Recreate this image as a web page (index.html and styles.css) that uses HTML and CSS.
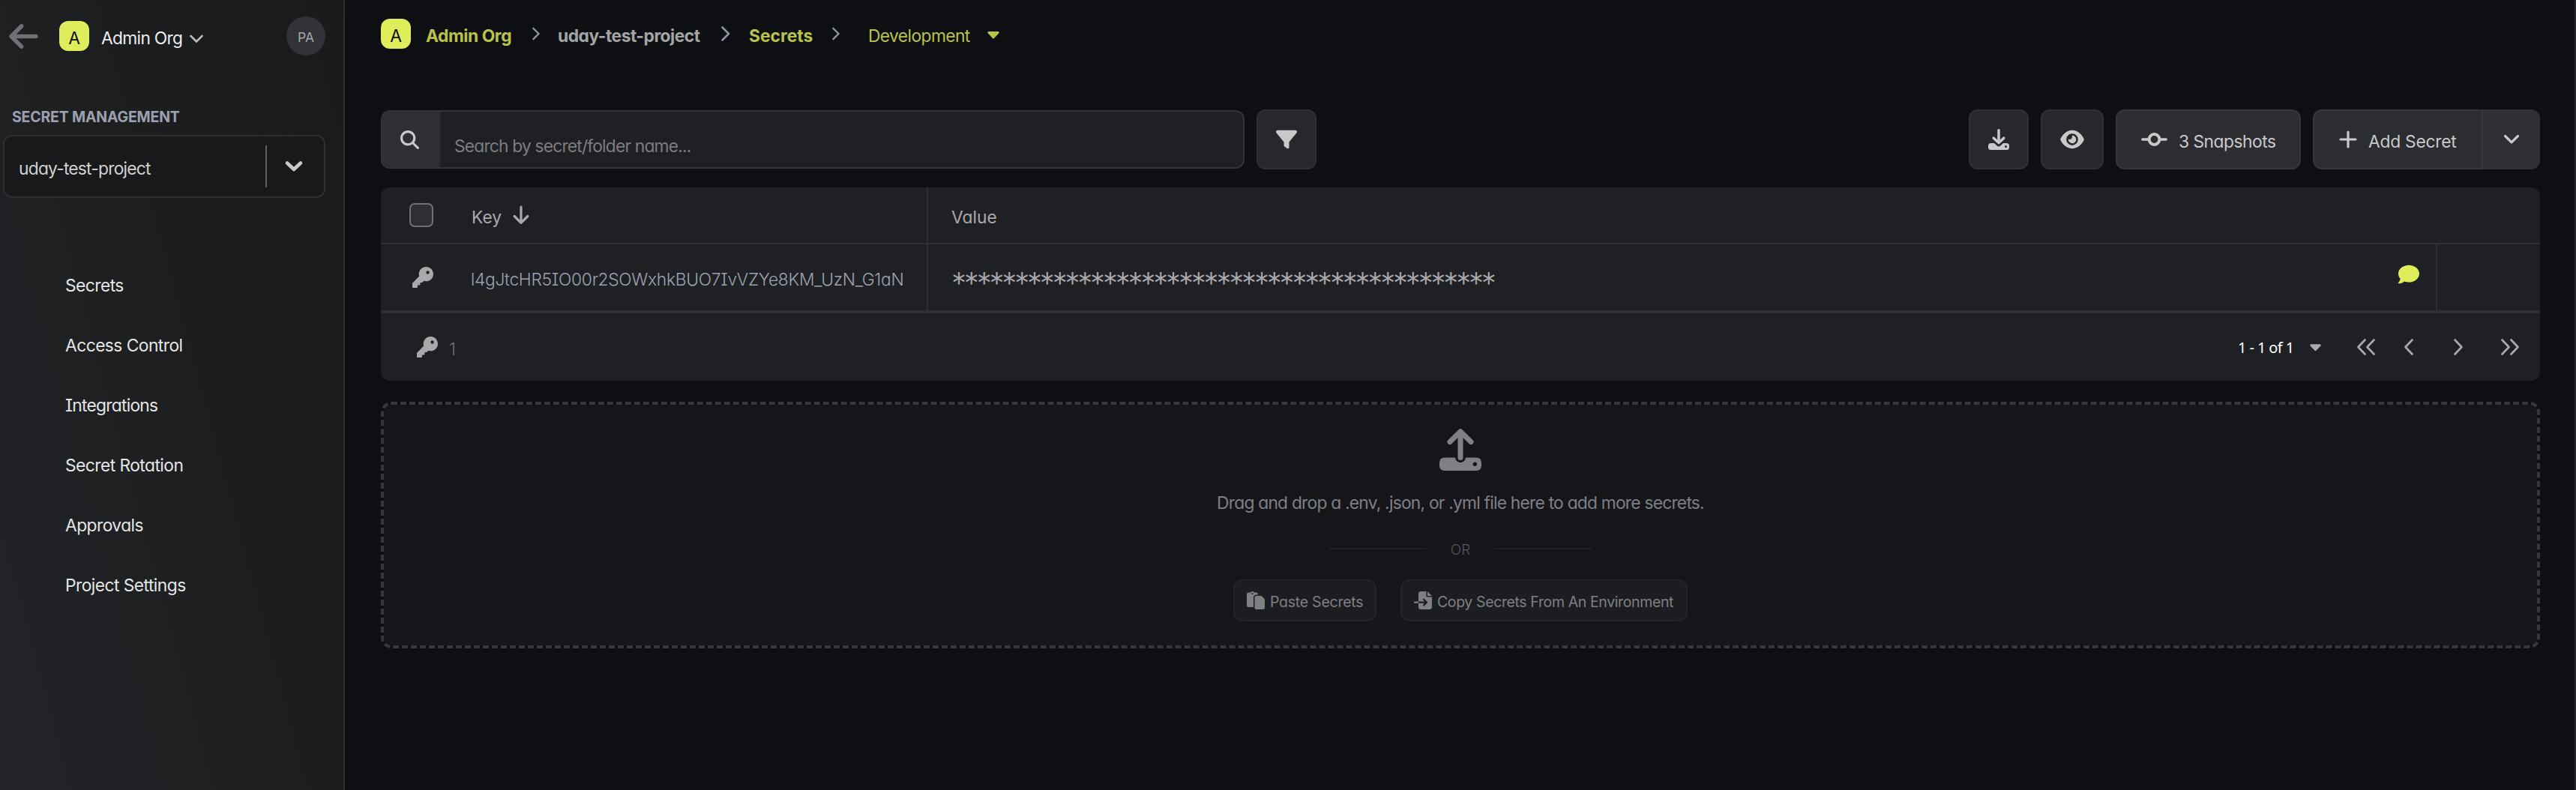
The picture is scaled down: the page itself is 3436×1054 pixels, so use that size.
FILE: index.html
```html
<!DOCTYPE html>
<html lang="en">
<head>
<meta charset="utf-8">
<title>Secrets</title>
<link rel="stylesheet" href="styles.css">
</head>
<body>
<svg width="0" height="0" class="defs">
  <symbol id="i-key" viewBox="0 0 512 512"><path d="M336 352c97.2 0 176-78.8 176-176S433.2 0 336 0S160 78.8 160 176c0 18.7 2.9 36.8 8.3 53.7L7 391c-4.5 4.5-7 10.6-7 17l0 80c0 13.3 10.7 24 24 24l80 0c13.3 0 24-10.7 24-24l0-40 40 0c13.3 0 24-10.7 24-24l0-40 40 0c6.4 0 12.5-2.5 17-7l33.3-33.3c16.9 5.4 35 8.3 53.7 8.3zM376 96a40 40 0 1 1 0 80 40 40 0 1 1 0-80z"/></symbol>
</svg>
<aside class="sidebar">
  <header class="org">
    <svg class="back" viewBox="0 64 448 384"><path d="M9.400 233.400c-12.500 12.500-12.500 32.800 0 45.300l160 160c12.500 12.500 32.800 12.500 45.300 0s12.500-32.800 0-45.300L109.200 288 416 288c17.700 0 32-14.300 32-32s-14.300-32-32-32l-306.700 0L214.600 118.600c12.500-12.500 12.500-32.800 0-45.300s-32.800-12.500-45.300 0l-160 160z"/></svg>
    <span class="badge">A</span>
    <span class="t org-name">Admin Org</span>
    <svg class="line org-chev" viewBox="0 0 20 14"><path d="M2.500 4 10 11.500 17.500 4" stroke-width="2.600"/></svg>
    <span class="avatar">PA</span>
  </header>
  <h2 class="section">SECRET MANAGEMENT</h2>
  <div class="select">
    <span class="t select-name">uday-test-project</span>
    <i class="select-sep"></i>
    <svg class="line select-chev" viewBox="0 0 24 16"><path d="M3 3.500 12 12 21 3.500" stroke-width="4.600"/></svg>
  </div>
  <nav class="menu">
    <a class="t">Secrets</a>
    <a class="t">Access Control</a>
    <a class="t">Integrations</a>
    <a class="t">Secret Rotation</a>
    <a class="t">Approvals</a>
    <a class="t">Project Settings</a>
  </nav>
</aside>
<main class="main">
  <div class="crumbs">
    <span class="badge">A</span>
    <b class="t crumb-org">Admin Org</b>
    <svg class="line sep" viewBox="0 0 12 20"><path d="M2 2 10 10 2 18" stroke-width="2.600"/></svg>
    <b class="t crumb-project">uday-test-project</b>
    <svg class="line sep big" viewBox="0 0 12 20"><path d="M2 1.500 10.500 10 2 18.500" stroke-width="2.600"/></svg>
    <b class="t crumb-secrets">Secrets</b>
    <svg class="line sep" viewBox="0 0 12 20"><path d="M2 2 10 10 2 18" stroke-width="2.600"/></svg>
    <span class="t crumb-env">Development</span>
    <svg class="crumb-caret" viewBox="0 0 16 10"><path d="M1.500 0h13q2 .6.800 2.200L9 9q-1 1-2 0L.700 2.200Q-.400.600 1.500 0z"/></svg>
  </div>
  <div class="toolbar">
    <div class="search">
      <span class="search-icon"><svg viewBox="0 0 512 512"><path d="M416 208c0 45.900-14.900 88.300-40 122.700L502.600 457.400c12.500 12.500 12.500 32.800 0 45.300s-32.800 12.500-45.300 0L330.700 376c-34.400 25.200-76.800 40-122.700 40C93.100 416 0 322.900 0 208S93.100 0 208 0S416 93.100 416 208zM208 352a144 144 0 1 0 0-288 144 144 0 1 0 0 288z"/></svg></span>
      <span class="search-hint">Search by secret/folder name...</span>
    </div>
    <button class="btn filter"><svg viewBox="0 0 512 512"><path d="M3.900 54.900C10.500 40.900 24.500 32 40 32l432 0c15.500 0 29.500 8.900 36.100 22.900s4.600 30.500-5.200 42.500L320 320.900 320 448c0 12.100-6.800 23.200-17.700 28.600s-23.800 4.300-33.500-3l-64-48c-8.100-6-12.800-15.500-12.800-25.600l0-79.100L9 97.300C-.7 85.400-2.800 68.800 3.900 54.900z"/></svg></button>
    <div class="actions">
      <button class="btn download">
        <svg viewBox="0 0 28 28"><path class="s" d="M14 1.800V17M7.200 12.200 14 18.600 20.800 12.200" stroke-width="3.500"/><path fill-rule="evenodd" d="M3.500 19H8l4 3.800q2 1.600 4 0L20 19h4.500q3.500 0 3.500 3.500v2q0 3.500-3.500 3.500h-21Q0 28 0 24.500v-2Q0 19 3.500 19zM23.500 22a1.500 1.500 0 1 0 0 3 1.500 1.500 0 1 0 0-3z"/></svg>
      </button>
      <button class="btn eye"><svg viewBox="0 0 576 512"><path d="M288 32c-80.800 0-145.500 36.800-192.600 80.600C48.600 156 17.300 208 2.500 243.700c-3.300 7.900-3.300 16.700 0 24.600C17.300 304 48.600 356 95.400 399.400C142.500 443.200 207.200 480 288 480s145.500-36.800 192.600-80.600c46.800-43.500 78.100-95.400 93-131.100c3.300-7.900 3.300-16.700 0-24.600c-14.900-35.700-46.200-87.700-93-131.100C433.500 68.800 368.800 32 288 32zM144 256a144 144 0 1 1 288 0 144 144 0 1 1 -288 0zm144-64c0 35.300-28.700 64-64 64c-7.100 0-13.900-1.200-20.300-3.300c-5.500-1.800-11.900 1.600-11.700 7.400c.3 6.900 1.300 13.800 3.200 20.700c13.700 51.200 66.400 81.600 117.600 67.900s81.600-66.400 67.900-117.600c-11.100-41.500-47.800-69.400-88.600-71.100c-5.800-.2-9.200 6.100-7.400 11.700c2.100 6.400 3.300 13.200 3.300 20.300z"/></svg></button>
      <button class="btn snapshots">
        <svg class="line" viewBox="0 0 35 18"><path d="M1.900 9H10M25 9h8.100" stroke-width="3.600"/><circle cx="17.500" cy="9" r="6.900" stroke-width="4"/></svg>
        <span class="t">3 Snapshots</span>
      </button>
      <div class="split">
        <button class="btn add">
          <svg class="line" viewBox="0 0 24 24"><path d="M12 2v20M2 12h20" stroke-width="3.200"/></svg>
          <span class="t">Add Secret</span>
        </button>
        <span class="more"><svg class="line" viewBox="0 0 22 14"><path d="M2.500 2.500 11 10.800 19.500 2.500" stroke-width="3.200"/></svg></span>
      </div>
    </div>
  </div>
  <section class="table">
    <div class="row head">
      <div class="c-icon"><span class="checkbox"></span></div>
      <div class="c-key"><span class="t key-head">Key</span>
        <svg class="line down" viewBox="0 0 22 26"><path d="M11 2v21M2.200 14.500 11 23.300 19.800 14.500" stroke-width="3.200"/></svg></div>
      <div class="c-value"><span class="t">Value</span></div>
    </div>
    <div class="row item">
      <div class="c-icon"><svg class="key"><use href="#i-key"/></svg></div>
      <div class="c-key"><span class="t key-name">l4gJtcHR5IO00r2SOWxhkBUO7IvVZYe8KM_UzN_G1aN</span></div>
      <div class="c-value"><span class="stars">*******************************************</span>
        <svg class="comment" viewBox="0 0 512 512"><path d="M512 240c0 114.900-114.600 208-256 208c-37.100 0-72.300-6.400-104.100-17.900c-11.900 8.700-31.300 20.600-54.300 30.600C73.600 471.100 44.700 480 16 480c-6.500 0-12.300-3.900-14.800-9.900c-2.500-6-1.100-12.800 3.400-17.400l.3-.3c.3-.3 .7-.7 1.300-1.400c1.100-1.200 2.800-3.100 4.900-5.700c4.100-5 9.600-12.400 15.200-21.600c10-16.600 19.500-38.400 21.400-62.900C17.700 326.800 0 285.100 0 240C0 125.100 114.600 32 256 32s256 93.100 256 208z"/></svg></div>
      <div class="c-end"></div>
    </div>
    <div class="foot">
      <svg class="key"><use href="#i-key"/></svg>
      <span class="t count">1</span>
      <span class="range">1 - 1 of 1</span>
      <svg class="foot-caret" viewBox="0 0 16 10"><path d="M1.500 0h13q2 .6.800 2.200L9 9q-1 1-2 0L.700 2.200Q-.400.600 1.500 0z"/></svg>
      <svg class="line p-first" viewBox="0 0 24 22"><path d="M10.500 1.500 1.500 11l9 9.500M22.500 1.500 13.500 11l9 9.500" stroke-width="2.700"/></svg>
      <svg class="line p-prev" viewBox="0 0 12 22"><path d="M10.500 1.500 1.500 11l9 9.500" stroke-width="2.700"/></svg>
      <svg class="line p-next" viewBox="0 0 12 22"><path d="M1.500 1.500l9 9.500-9 9.500" stroke-width="2.700"/></svg>
      <svg class="line p-last" viewBox="0 0 24 22"><path d="M1.500 1.500l9 9.500-9 9.500M13.500 1.500l9 9.500-9 9.500" stroke-width="2.700"/></svg>
    </div>
  </section>
  <section class="drop">
    <svg class="upload" viewBox="0 0 56 56"><path class="s" d="M28 4V38.500M14 17.500 28 3.800 42 17.500" stroke-width="7"/><path fill-rule="evenodd" d="M7 38.500H21a7 6.500 0 0 0 14 0H49q7 0 7 7v3.500q0 7-7 7H7q-7 0-7-7v-3.500q0-7 7-7zM47.300 44.600a2.700 2.700 0 1 0 0 5.400 2.700 2.700 0 1 0 0-5.400z"/></svg>
    <p class="t drop-text">Drag and drop a .env, .json, or .yml file here to add more secrets.</p>
    <div class="or"><i></i><span>OR</span><i></i></div>
    <div class="drop-actions">
      <button class="small paste"><svg viewBox="0 0 512 512"><path d="M160 0c-23.700 0-44.400 12.900-55.400 32L48 32C21.500 32 0 53.500 0 80L0 400c0 26.500 21.500 48 48 48l144 0 0-272c0-44.200 35.800-80 80-80l48 0 0-16c0-26.500-21.500-48-48-48l-56.600 0C204.400 12.900 183.700 0 160 0zM272 128c-26.500 0-48 21.500-48 48l0 272 0 16c0 26.500 21.500 48 48 48l192 0c26.500 0 48-21.500 48-48l0-220.100c0-12.700-5.100-24.900-14.100-33.900l-67.900-67.900c-9-9-21.200-14.100-33.900-14.100L320 128l-48 0zM160 40a24 24 0 1 1 0 48 24 24 0 1 1 0-48z"/></svg><span>Paste Secrets</span></button>
      <button class="small copy"><svg viewBox="0 0 512 512"><path d="M128 64c0-35.300 28.700-64 64-64L352 0l0 128c0 17.700 14.300 32 32 32l128 0 0 288c0 35.300-28.700 64-64 64l-256 0c-35.300 0-64-28.700-64-64l0-112 174.100 0-39 39c-9.400 9.400-9.400 24.600 0 33.900s24.600 9.400 33.900 0l80-80c9.400-9.400 9.400-24.600 0-33.900l-80-80c-9.400-9.400-24.600-9.400-33.900 0s-9.400 24.600 0 33.900l39 39L128 288l0-224zm0 224l0 48L24 336c-13.300 0-24-10.700-24-24s10.700-24 24-24l104 0zM512 128l-128 0L384 0 512 128z"/></svg><span>Copy Secrets From An Environment</span></button>
    </div>
  </section>
</main>
</body>
</html>
```
FILE: styles.css
```css
* { box-sizing: border-box; margin: 0; padding: 0; }
body {
  display: flex;
  height: 1054px;
  overflow: hidden;
  background: #0e0f13;
  color: #c8c9cb;
  font: 400 22.8px/30px Inter, "Liberation Sans", sans-serif;
  font-feature-settings: "cv11", "cv08", "calt" 0;
  white-space: nowrap;
}
svg { display: block; flex: none; fill: currentColor; overflow: visible; }
.defs { position: absolute; }
.line, .s { fill: none; stroke: currentColor; stroke-linecap: round; stroke-linejoin: round; }
button { font: inherit; font-feature-settings: inherit; color: inherit; border: 0; background: none; display: flex; align-items: center; }
.t { padding-top: 5.400px; display: block; }
.badge {
  width: 40px; height: 40px; flex: none;
  padding-top: 5.400px;
  display: flex; align-items: center; justify-content: center;
  border-radius: 12px;
  background: #e0ed5a; color: #0e0f13;
}

/* sidebar */
.sidebar {
  width: 460px; flex: none;
  border-right: 2px solid #2d2f33;
  background: linear-gradient(75deg, #222428 0%, #1c1d1e 60%, #1a1a1b 100%);
}
.org { display: flex; align-items: center; height: 52px; margin: 22px 24px 0 12px; }
.back { width: 39px; height: 33px; color: #707174; }
.org .badge { margin-left: 28px; }
.org-name { margin-left: 16px; width: 117px; letter-spacing: -.7px; color: #ececed; }
.org-chev { width: 20px; height: 14px; margin-top: 6px; color: #b9babc; }
.avatar {
  width: 52px; height: 52px; margin-left: auto;
  display: flex; align-items: center; justify-content: center;
  padding-top: 3px;
  border-radius: 50%;
  background: #323338; color: #a5a6a8;
  font-size: 17.500px;
}
.section {
  margin: 67px 0 0 16px; height: 39px;
  font-size: 19.500px; line-height: 30px; font-weight: 700; letter-spacing: -.2px;
  color: #9ba1b0;
}
.select {
  display: flex; align-items: center;
  width: 430px; height: 84px; margin-left: 4px; padding-left: 19px;
  border: 2px solid #2d2f33; border-radius: 12px;
  background: #18191b;
}
.select-name { width: 329px; letter-spacing: -.78px; color: #d0d1d2; }
.select-sep { width: 2px; height: 56px; background: #606166; }
.select-chev { width: 24px; height: 16px; margin-left: 24px; color: #c8c9cb; }
.menu { display: flex; flex-direction: column; padding: 74px 0 0 87px; }
.menu a { height: 80px; padding-top: 27.700px; letter-spacing: -.55px; color: #e4e5e6; }
.menu a:nth-child(3) { letter-spacing: -.75px; }

/* breadcrumb */
.main {
  flex: 1;
  padding: 25px 46px 0 48px;
  border-right: 2px solid #222428;
}
.crumbs { display: flex; align-items: center; height: 40px; color: #b9c24a; }
.crumb-org { margin-left: 20px; width: 141px; letter-spacing: -.45px; }
.crumb-project { margin-left: 23px; width: 217px; letter-spacing: -.5px; color: #a3a4a6; }
.crumb-secrets { margin-left: 25px; width: 110px; }
.sep { width: 12px; height: 18px; color: #8f96a3; }
.sep.big { width: 13px; height: 20px; }
.crumb-env { margin-left: 37px; width: 159px; letter-spacing: -.6px; }
.crumb-caret { width: 16px; height: 10px; margin-top: 3px; }

/* toolbar */
.toolbar { display: flex; align-items: center; height: 80px; margin-top: 81px; }
.search {
  display: flex; width: 1152px; height: 78px; overflow: hidden;
  border-radius: 12px; border: 2px solid #323438;
  background: #1f2023;
}
.search-icon { width: 77px; padding: 25px 0 0 24px; background: #2d2f33; }
.search-icon svg { width: 25px; height: 25px; }
.search-hint { padding: 31px 0 0 19px; letter-spacing: -.82px; color: #7c7d80; }
.btn {
  height: 80px;
  border: 2px solid #2f3135; border-radius: 12px;
  background: #27282b;
  justify-content: center;
}
.btn svg { width: 28px; height: 28px; }
.filter { width: 80px; margin-left: 16px; }
.actions { display: flex; gap: 16px; margin-left: auto; }
.download { width: 80px; }
.btn.eye { width: 84px; }
.btn.eye svg { width: 32px; }
.snapshots, .add { background: #2c2d30; border-color: #34363a; justify-content: flex-start; }
.snapshots { width: 247px; padding-left: 32px; letter-spacing: -.5px; }
.snapshots svg { width: 35px; height: 18px; margin-right: 15px; }
.split { display: flex; width: 303px; }
.add { width: 227px; padding-left: 33px; border-radius: 12px 0 0 12px; letter-spacing: -.25px; }
.add svg { width: 24px; height: 24px; margin-right: 15px; }
.more { width: 76px; display: flex; align-items: center; padding-left: 27px; border-radius: 0 12px 12px 0; background: #2f3034; }
.more svg { width: 22px; height: 14px; }

/* table */
.table { margin-top: 24px; height: 258px; border-radius: 12px; background: #1f2023; color: #a8a9ab; }
.row { display: flex; border-bottom: 2px solid #2d2f33; }
.row > div { display: flex; align-items: center; }
.head { height: 76px; }
.item { height: 92px; border-bottom-width: 4px; }
.c-icon { width: 120px; padding-left: 38px; }
.item .c-icon { padding-left: 42px; }
.c-key { width: 610px; border-right: 2px solid #2d2f33; }
.key-head { padding-left: 1px; }
.c-value { flex: 1; padding-left: 31px; }
.c-end { width: 139px; border-left: 2px solid #2d2f33; }
.checkbox { width: 32px; height: 32px; border: 2px solid #6f7073; border-radius: 7px; background: #2d2f33; }
.down { width: 22px; height: 26px; margin-left: 15px; }
.key { width: 28px; height: 28px; color: #a8a9ab; }
.key-name { font-weight: 300; letter-spacing: -.3px; color: #9ba1b0; }
.stars { font-size: 40px; line-height: 40px; padding-top: 15px; font-weight: 300; letter-spacing: -3.190px; }
.comment { width: 28px; height: 28px; margin: -8px 22px 0 auto; color: #e0ed5a; }
.foot { display: flex; align-items: center; height: 90px; padding: 0 28px 0 48px; }
.count { margin-left: 15px; color: #6f7073; font-weight: 300; }
.range { margin-left: auto; padding-top: 2px; width: 96px; font: 400 20px/28px "Noto Sans", sans-serif; letter-spacing: -.6px; color: #fff; }
.foot-caret { width: 15px; height: 10px; margin-top: 2px; }
.p-first { width: 24px; height: 22px; margin-left: 48px; }
.p-prev { width: 12px; height: 22px; margin-left: 39px; }
.p-next { width: 12px; height: 22px; margin-left: 54px; }
.p-last { width: 24px; height: 22px; margin-left: 51px; }

/* drop area */
.drop {
  display: flex; flex-direction: column; align-items: center;
  height: 329px; margin-top: 28px; padding-top: 32px;
  border: 4px dashed #35373b; border-radius: 14px;
  background: #16151a; background-clip: padding-box;
  color: #7f8084;
}
.upload { width: 56px; height: 56px; }
.drop-text { margin-top: 23px; letter-spacing: -.78px; }
.or { display: flex; align-items: center; height: 30px; margin-top: 31px; font-size: 19px; font-weight: 300; color: #57585c; }
.or i { width: 130px; height: 2px; background: #1f2023; }
.or span { width: 90px; padding-top: 4px; text-align: center; }
.drop-actions { display: flex; gap: 32px; margin-top: 26px; }
.small { height: 56px; padding-left: 16px; border: 2px solid #232428; border-radius: 12px; background: #1c1d20; font-size: 19.500px; }
.small svg { width: 24px; height: 24px; margin-right: 7px; }
.small span { padding-top: 4px; }
.paste { width: 191px; letter-spacing: -.25px; }
.copy { width: 383px; letter-spacing: -.38px; }
```
